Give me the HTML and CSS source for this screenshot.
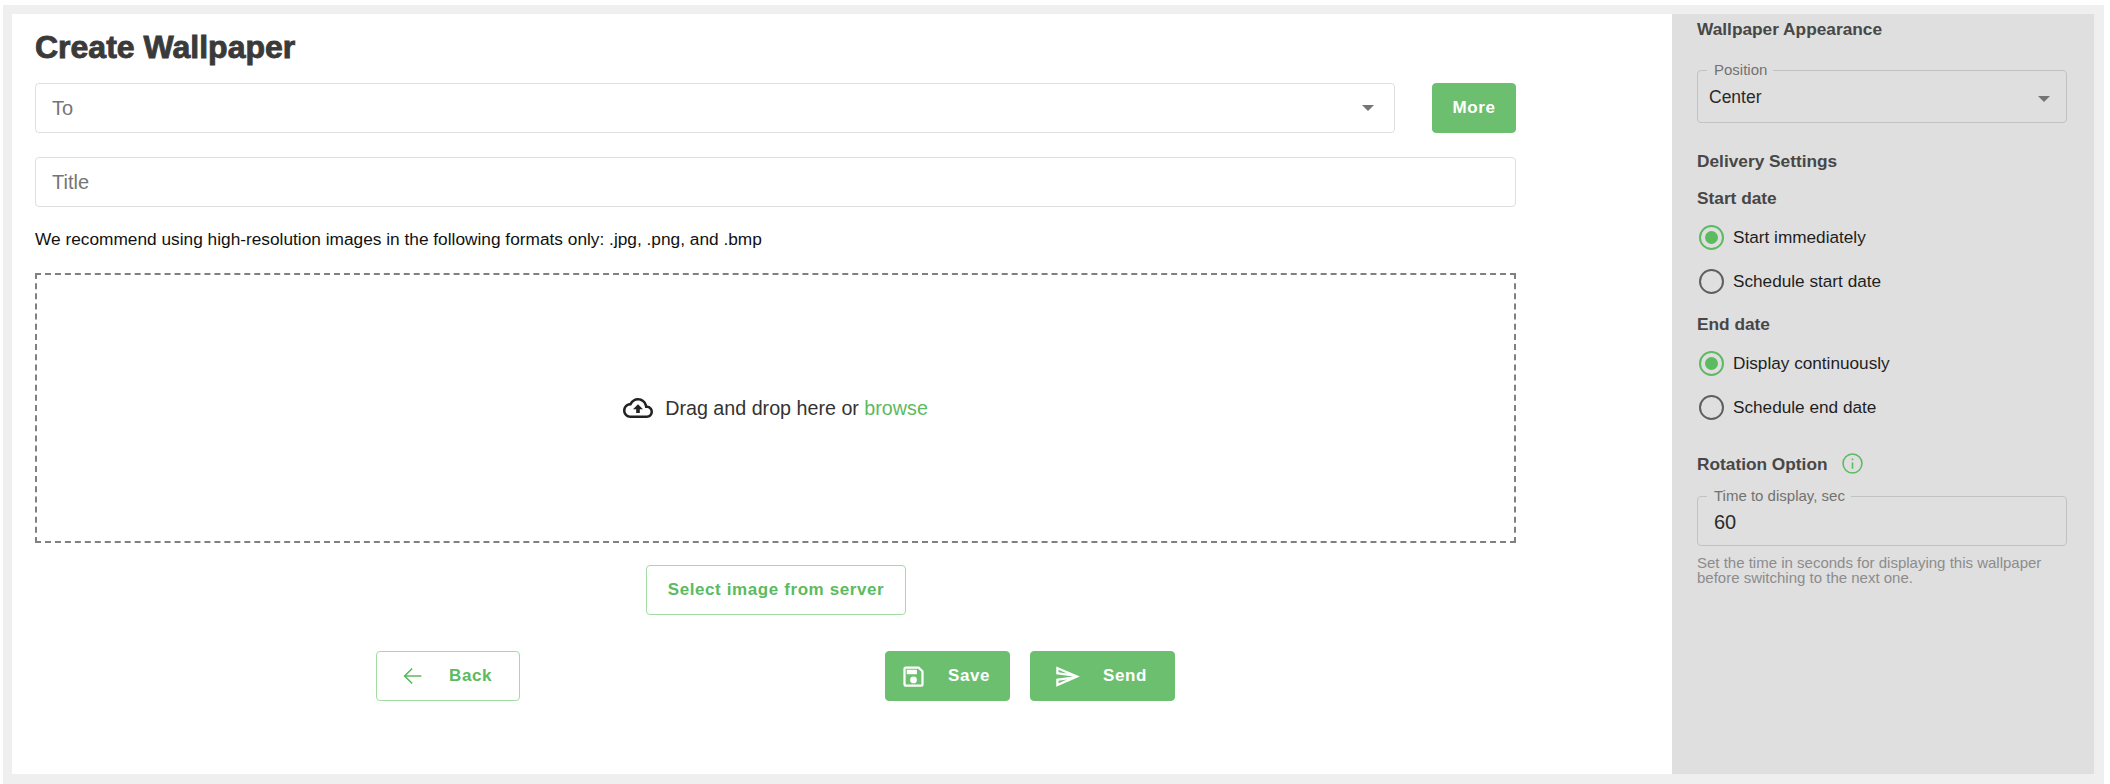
FILE: index.html
```html
<!DOCTYPE html>
<html lang="en">
<head>
<meta charset="utf-8">
<title>Create Wallpaper</title>
<link rel="stylesheet" href="styles.css">
</head>
<body>
<div class="frame">
  <main class="main">
    <h1 class="title">Create Wallpaper</h1>
    <div class="to-row">
      <div class="field to-field"><span class="placeholder">To</span><span class="caret caret-dark"></span></div>
      <button class="btn btn-solid more">More</button>
    </div>
    <div class="field title-field"><span class="placeholder">Title</span></div>
    <p class="note">We recommend using high-resolution images in the following formats only: .jpg, .png, and .bmp</p>
    <div class="drop">
      <svg class="cloud" viewBox="0 0 24 24" fill="#222"><path d="M19.35 10.04C18.67 6.59 15.64 4 12 4 9.11 4 6.6 5.64 5.35 8.04 2.34 8.36 0 10.91 0 14c0 3.31 2.69 6 6 6h13c2.76 0 5-2.24 5-5 0-2.64-2.05-4.78-4.65-4.96zM19 18H6c-2.21 0-4-1.79-4-4 0-2.05 1.53-3.76 3.56-3.97l1.07-.11.5-.95C8.08 7.14 9.94 6 12 6c2.62 0 4.88 1.86 5.39 4.43l.3 1.5 1.53.11c1.56.1 2.78 1.41 2.78 2.96 0 1.65-1.35 3-3 3zM8 13h2.55v3h2.9v-3H16l-4-4z"/></svg>
      <span class="drop-text">Drag and drop here or <span class="browse">browse</span></span>
    </div>
    <div class="server-row"><button class="btn btn-outline server">Select image from server</button></div>
    <div class="actions">
      <button class="btn btn-outline back">
        <svg class="ico" viewBox="0 0 24 24" fill="none" stroke="#5cba60" stroke-width="2"><path d="M22 12H3M11 3l-9 9 9 9"/></svg>
        <span>Back</span>
      </button>
      <button class="btn btn-solid save">
        <svg class="ico ico-save" viewBox="0 0 24 24" fill="#fff"><path d="M17 3H5a2 2 0 0 0-2 2v14a2 2 0 0 0 2 2h14a2 2 0 0 0 2-2V7l-4-4zm2 16H5V5h11.17L19 7.83V19zm-7-7a3 3 0 1 0 0 6 3 3 0 0 0 0-6zM6 6h9v4H6z"/></svg>
        <span>Save</span>
      </button>
      <button class="btn btn-solid send">
        <svg class="ico ico-send" viewBox="0 0 24 24" fill="#fff"><path d="M4.01 6.03l7.51 3.22-7.52-1 .01-2.22m7.5 8.72L4 17.97v-2.22l7.51-1M2.01 3L2 10l15 2-15 2 .01 7L23 12 2.01 3z"/></svg>
        <span>Send</span>
      </button>
    </div>
  </main>
  <aside class="side">
    <h3 class="head head-first">Wallpaper Appearance</h3>
    <fieldset class="outlined position">
      <legend class="legend">Position</legend>
      <span class="value value-center">Center</span>
      <span class="caret caret-side"></span>
    </fieldset>
    <h3 class="head head-delivery">Delivery Settings</h3>
    <h3 class="head head-start">Start date</h3>
    <div class="radios">
      <div class="radio-row"><span class="radio on"></span>Start immediately</div>
      <div class="radio-row"><span class="radio"></span>Schedule start date</div>
    </div>
    <h3 class="head head-end">End date</h3>
    <div class="radios">
      <div class="radio-row"><span class="radio on"></span>Display continuously</div>
      <div class="radio-row"><span class="radio"></span>Schedule end date</div>
    </div>
    <h3 class="head head-rotation">Rotation Option
      <svg class="info" viewBox="0 0 20 20" fill="none" stroke="#5cba60" stroke-width="1.5"><circle cx="10" cy="10" r="9"/><path d="M10 9v6"/><path d="M10 5.2v1.6"/></svg>
    </h3>
    <fieldset class="outlined time">
      <legend class="legend">Time to display, sec</legend>
      <span class="value value-time">60</span>
    </fieldset>
    <p class="help">Set the time in seconds for displaying this wallpaper before switching to the next one.</p>
  </aside>
</div>
</body>
</html>
```
FILE: styles.css
```css
* { box-sizing: border-box; }
html, body { margin: 0; padding: 0; background: #fff; }
body { font-family: "Liberation Sans", Arial, sans-serif; height: 784px; overflow: hidden; }
.frame {
  display: flex;
  height: 779px;
  margin: 5px 6px 0 3px;
  padding: 9px 10px 10px 9px;
  background: #efefef;
}
.main { flex: 1; background: #fff; padding: 13px 0 0 23px; }
.title {
  margin: 0;
  font-size: 32px;
  line-height: 40px;
  font-weight: 700;
  color: #3a3a3a;
  -webkit-text-stroke: 0.9px #3a3a3a;
}
.to-row { display: flex; width: 1481px; margin-top: 16px; justify-content: space-between; }
.field {
  display: flex;
  align-items: center;
  justify-content: space-between;
  height: 50px;
  padding: 0 16px;
  border: 1px solid #dfdfdf;
  border-radius: 4px;
  background: #fff;
}
.to-field { width: 1360px; padding-right: 20px; }
.title-field { width: 1481px; margin-top: 24px; }
.placeholder { font-size: 20px; color: #757575; }
.caret { width: 0; height: 0; border-left: 6.5px solid transparent; border-right: 6.5px solid transparent; border-top: 6.5px solid #757575; }
.note { margin: 22px 0 0; font-size: 17.3px; line-height: 20px; color: #111; }
.drop {
  display: flex;
  align-items: center;
  justify-content: center;
  gap: 12px;
  width: 1481px;
  height: 270px;
  margin-top: 24px;
  border: 2px dashed #808080;
}
.cloud { width: 30px; height: 30px; }
.drop-text { font-size: 19.7px; color: #333; }
.browse { color: #5cba60; }
.server-row { display: flex; margin-top: 22px; padding-left: 611px; }
.btn {
  display: flex;
  align-items: center;
  height: 50px;
  margin: 0;
  padding: 0;
  border-radius: 4px;
  font-family: inherit;
  font-size: 17px;
  font-weight: 700;
  letter-spacing: 0.6px;
}
.btn-solid { background: #6cbf6f; color: #fff; border: 1px solid #6cbf6f; }
.btn-outline { background: #fff; color: #5cba60; border: 1px solid #a3dba5; }
.more { width: 84px; justify-content: center; }
.server { width: 260px; height: 50px; justify-content: center; }
.actions { display: flex; margin-top: 36px; padding-left: 341px; }
.back { width: 144px; padding-left: 26px; gap: 26px; }
.save { width: 125px; margin-left: 365px; padding-left: 14px; gap: 21px; }
.send { width: 145px; margin-left: 20px; padding-left: 23px; gap: 22px; }
.ico { width: 20px; height: 22px; flex: none; }
.ico-save { width: 27px; height: 27px; }
.ico-send { width: 27px; height: 27px; }
.side { width: 422px; padding: 6px 27px 0 25px; background: #dfdfdf; }
.head { margin: 0; font-size: 17.3px; line-height: 18px; font-weight: 700; color: #474747; }
.head-delivery { margin-top: 29px; }
.head-start { margin-top: 19px; }
.head-end { margin-top: 11px; }
.head-rotation { display: flex; align-items: center; gap: 14px; margin-top: 23px; }
.info { width: 21px; height: 21px; }
.outlined {
  position: relative;
  display: flex;
  align-items: center;
  margin: 0;
  padding: 0 0 0 9px;
  width: 370px;
  border: 1px solid #c2c2c2;
  border-radius: 4px;
  min-width: 0;
}
.position { height: 61px; margin-top: 24px; padding-bottom: 6px; }
.time { height: 58px; margin-top: 14px; padding-bottom: 4px; }
.legend { padding: 0 6px 0 7px; font-size: 15px; line-height: 16px; color: #727272; }
.value { color: #2a2a2a; }
.value-center { font-size: 17.5px; margin-left: 2px; }
.value-time { font-size: 20px; margin-left: 7px; }
.caret-side { position: absolute; right: 16px; top: 50%; margin-top: -4px; }
.radios { margin-top: 8px; }
.radio-row { display: flex; align-items: center; gap: 9px; height: 44.5px; padding-left: 2px; font-size: 17.2px; color: #1e1e1e; }
.radio { position: relative; width: 25px; height: 25px; border: 2px solid #5f5f5f; border-radius: 50%; flex: none; }
.radio.on { border-color: #5cba60; }
.radio.on::after { content: ""; position: absolute; inset: 4px; border-radius: 50%; background: #5cba60; }
.help { margin: 9px 0 0; font-size: 15px; line-height: 15px; color: #8c8c8c; }
```
